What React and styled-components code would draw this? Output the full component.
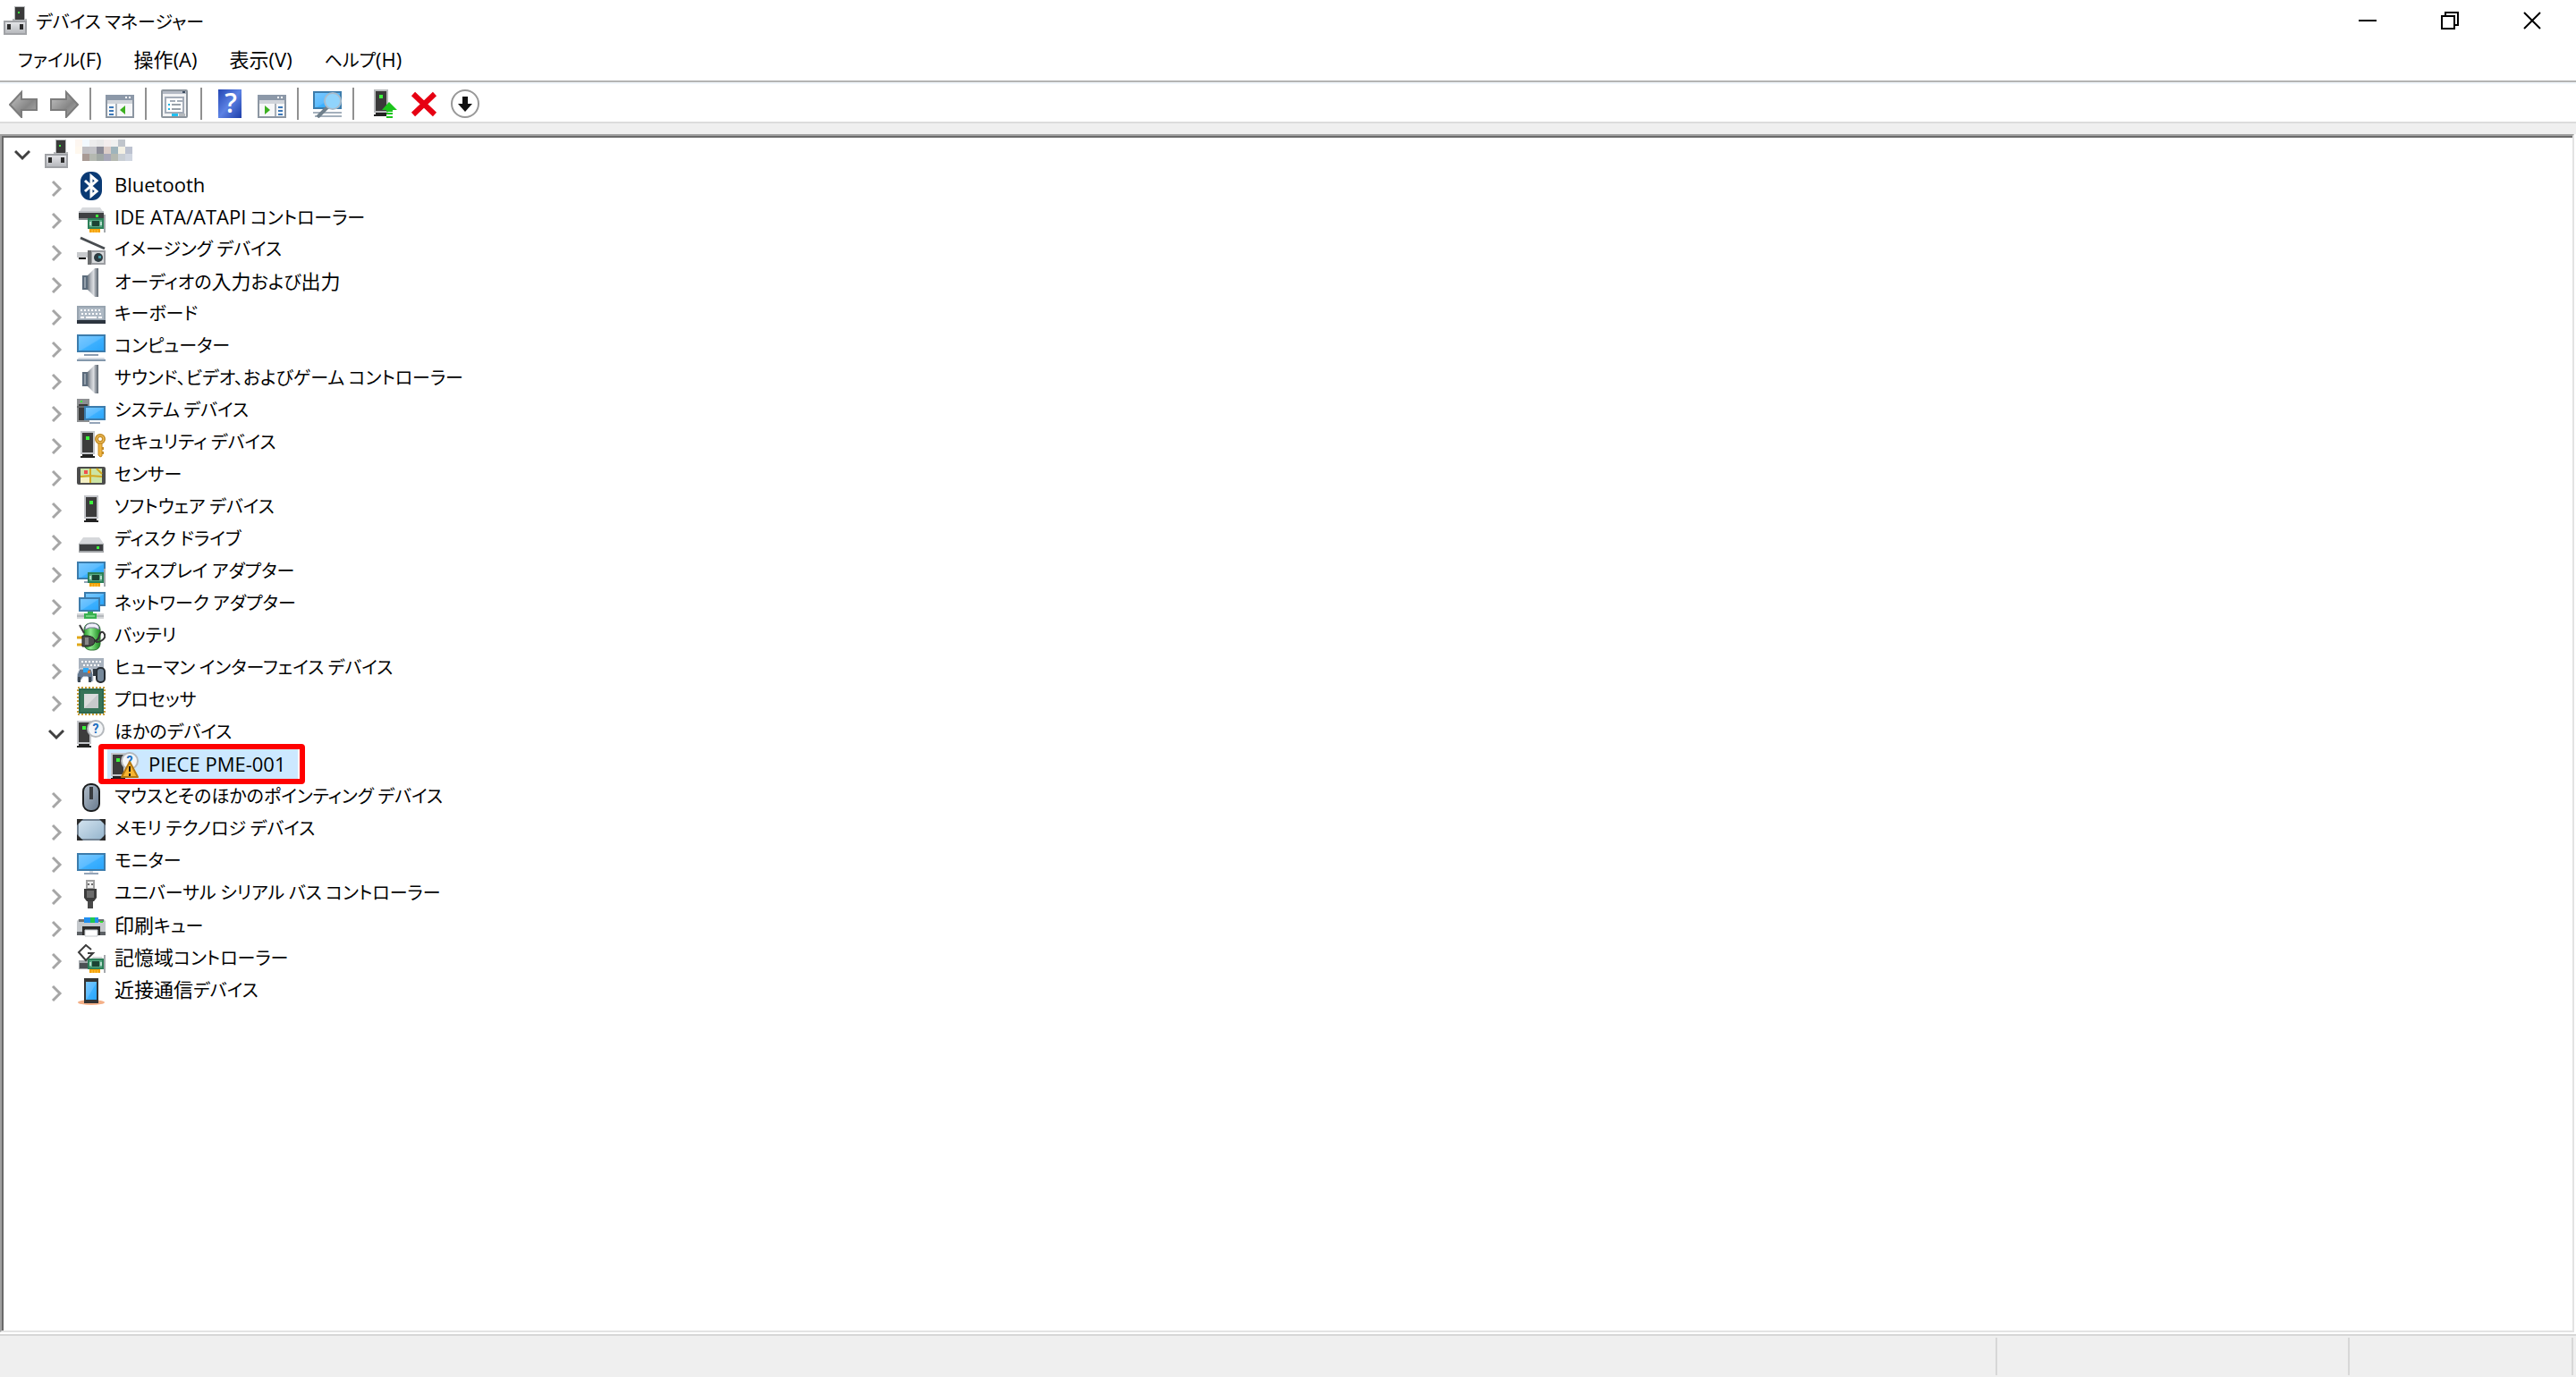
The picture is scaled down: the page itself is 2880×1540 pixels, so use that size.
import styled, { createGlobalStyle } from 'styled-components';

const GlobalStyle = createGlobalStyle`
  html, body, #root {
    height: 100%;
  }
  body {
    margin: 0;
    background: #fff;
    color: #000;
    font-family: 'Noto Sans CJK JP', sans-serif;
    font-size: 20px;
    font-feature-settings: 'palt';
  }
`;

const Window = styled.div`
  display: flex;
  flex-direction: column;
  height: 100%;
`;

const TitleBar = styled.header`
  display: flex;
  align-items: center;
  height: 46px;
  padding: 0 3px 0 2px;
`;

const Title = styled.h1`
  flex: 1;
  margin: 0 0 0 6px;
  font-size: 20px;
  font-weight: 400;
`;

const PlainButton = styled.button`
  display: flex;
  align-items: center;
  justify-content: center;
  padding: 0;
  border: 0;
  background: none;
  color: inherit;
  font: inherit;
`;

const WindowButton = styled(PlainButton)`
  width: 92px;
  height: 44px;
`;

const MenuBar = styled.nav`
  display: flex;
  height: 44px;
  padding: 0 2px;
  border-bottom: 2px solid #b4b4b4;
`;

const MenuItem = styled(PlainButton)`
  padding: 0 18px 4px;
  font-feature-settings: 'palt';
  line-height: 36px;
  white-space: nowrap;
`;

const ToolBar = styled.div`
  display: flex;
  align-items: center;
  height: 40px;
  padding: 2px 0 0 3px;
  border-top: 2px solid #f2f7fc;
  border-bottom: 2px solid #dcdcdc;
`;

const ToolButton = styled(PlainButton)`
  width: 46px;
  height: 40px;
`;

const Separator = styled.span`
  width: 2px;
  height: 36px;
  margin: 0 9px 0 5px;
  background: #909090;
`;

const Body = styled.main`
  flex: 1;
  display: flex;
  padding-top: 12px;
  background: linear-gradient(#efefef 12px, #fff 12px);
`;

const Panel = styled.div`
  flex: 1;
  display: flex;
  margin: 0 2px 2px 0;
  border: 2px solid;
  border-color: #a0a0a0 #e3e3e3 #e3e3e3 #a0a0a0;
`;

const Tree = styled.ul`
  flex: 1;
  margin: 0;
  padding: 0;
  list-style: none;
  border: solid #696969;
  border-width: 2px 0 0 2px;
`;

const Group = styled.ul`
  margin: 0;
  padding: 0 0 0 38px;
  list-style: none;
`;

const Row = styled.div`
  display: flex;
  align-items: center;
  height: 36px;
  padding-left: 12px;
`;

const Expander = styled(PlainButton)`
  width: 18px;
  height: 36px;
  margin-right: 10px;
`;

const Item = styled.div`
  position: relative;
  display: flex;
  align-items: center;
  gap: 4px;
  height: 36px;
  padding: 0 14px 0 4px;
  background: ${(p) => (p.$selected ? '#cce8ff' : 'none')};
`;

const Label = styled.span`
  padding: 0 0 4px 6px;
  line-height: 32px;
  white-space: nowrap;
`;

const Run = styled.span`
  font-family: ${(p) => (p.$latin ? "'Open Sans'" : "'Noto Sans CJK JP'")}, sans-serif;
  font-size: 22px;
  white-space: pre;
`;

const Marker = styled.span`
  position: absolute;
  inset: -6px -8px -3px -10px;
  border: 6px solid #f00;
  border-radius: 4px;
`;

const StatusBar = styled.footer`
  display: grid;
  grid-template-columns: 1fr 394px 250px;
  height: 42px;
  padding: 2px 3px 2px 0;
  border-top: 2px solid #d7d7d7;
  background: #efefef;
`;

const StatusCell = styled.div`
  border-right: 2px solid #d7d7d7;
`;

const Svg = ({ children, ...props }) => (
  <svg width='32' height='32' viewBox='0 0 32 32' fill='none' aria-hidden='true' {...props}>
    {children}
  </svg>
);

const Gradients = () => (
  <svg width='0' height='0' style={{ position: 'absolute' }} aria-hidden='true'>
    <linearGradient id='screen' x1='0' y1='0' x2='1' y2='1'>
      <stop offset='0' stopColor='#7cc9ff' />
      <stop offset='0.5' stopColor='#5cbcff' />
      <stop offset='0.55' stopColor='#3cb0ff' />
      <stop offset='1' stopColor='#28a4fb' />
    </linearGradient>
    <linearGradient id='metal' x1='0' y1='0' x2='0' y2='1'>
      <stop offset='0' stopColor='#e6e7ea' />
      <stop offset='1' stopColor='#b4b6ba' />
    </linearGradient>
    <linearGradient id='cone' x1='0' y1='0' x2='1' y2='0'>
      <stop offset='0' stopColor='#6c7680' />
      <stop offset='0.3' stopColor='#b6bac0' />
      <stop offset='0.55' stopColor='#dcdee2' />
      <stop offset='0.75' stopColor='#959ca4' />
      <stop offset='1' stopColor='#59626c' />
    </linearGradient>
    <linearGradient id='arrow' x1='0' y1='0' x2='1' y2='1'>
      <stop offset='0' stopColor='#c8c8c8' />
      <stop offset='0.6' stopColor='#868686' />
      <stop offset='1' stopColor='#b0b0b0' />
    </linearGradient>
    <linearGradient id='help' x1='0' y1='0' x2='1' y2='1'>
      <stop offset='0' stopColor='#2446b4' />
      <stop offset='0.5' stopColor='#5c82e4' />
      <stop offset='1' stopColor='#1c3ca8' />
    </linearGradient>
    <linearGradient id='mouse' x1='0' y1='0' x2='1' y2='1'>
      <stop offset='0' stopColor='#b4c0cc' />
      <stop offset='1' stopColor='#66788c' />
    </linearGradient>
    <linearGradient id='battery' x1='0' y1='0' x2='1' y2='0'>
      <stop offset='0' stopColor='#2a9a2a' />
      <stop offset='0.4' stopColor='#8ce88c' />
      <stop offset='1' stopColor='#1c8a20' />
    </linearGradient>
    <linearGradient id='memory' x1='0' y1='0' x2='1' y2='1'>
      <stop offset='0' stopColor='#d4e4f0' />
      <stop offset='1' stopColor='#94b4cc' />
    </linearGradient>
  </svg>
);

const Screen = ({ x, y, w, h }) => (
  <rect x={x + 1} y={y + 1} width={w - 2} height={h - 2} fill='url(#screen)' stroke='#3c7cac' strokeWidth='2' />
);

const Tower = ({ x, w = 16 }) => (
  <>
    <path d={`M${x} 2h${w}v26h${-w}z`} fill='#c4c6ca' />
    <path d={`M${x + 2} 4h${w - 4}v22h${4 - w}z`} fill='#3c3c3c' />
    <path d={`M${x} 30h2v-2h${w - 4}v2h2v2h${-w}z`} fill='#222' />
    <path d={`M${x + w / 2 - 2} 8h4v4h-4z`} fill='#3cf43c' />
  </>
);

const Card = () => (
  <>
    <path d='M30 12h2v20h-2z' fill='#a4a8ac' />
    <path d='M12 16h18v12H12z' fill='#2c8058' />
    <path d='M14 18h14v8H14z' fill='#58a884' />
    <path d='M17 19h8v6h-8z' fill='#1c4434' />
    <path d='M14 20h2v4h-2zM26 20h2v4h-2z' fill='#b8dccc' />
    <path d='M14 28h12v4H14z' fill='#f4a000' />
    <path d='M17 29v3M20 29v3M23 29v3' stroke='#ffc850' />
  </>
);

const Query = () => (
  <>
    <circle cx='21' cy='11' r='9' fill='#f4f6f8' stroke='#b4b8bc' strokeWidth='2' />
    <text x='21' y='16' textAnchor='middle' fontFamily='Roboto' fontWeight='700' fontSize='14' fill='#1c70c0'>
      ?
    </text>
  </>
);

const icons = {
  root: (
    <>
      <path d='M14 0h12v14h2v2H12v-2h2z' fill='#b8babc' />
      <path d='M15 1h10v14H15z' fill='#3a3a3a' />
      <path d='M18 6h2v2h-2z' fill='#3cf43c' />
      <path d='M3 17h24v14H3z' fill='url(#metal)' stroke='#a0a2a6' strokeWidth='2' />
      <path d='M6 20h4v6H6zM20 20h4v6h-4z' fill='#2c2c2c' />
    </>
  ),
  bluetooth: (
    <>
      <rect x='4' width='24' height='32' rx='11' fill='#0a3a74' />
      <path d='M9 10l13 12-6 5V5l6 5L9 22' stroke='#fff' strokeWidth='3' />
    </>
  ),
  ide: (
    <>
      <path d='M6 4h20l4 6H2z' fill='#d8dadd' />
      <path d='M2 8h28v3H2z' fill='#bcbfc4' />
      <path d='M2 10h28v8H2z' fill='#3e4042' />
      <path d='M2 16h28v2H2z' fill='#8a8d90' />
      <path d='M21 12h3v3h-3z' fill='#3cf43c' />
      <Card />
    </>
  ),
  imaging: (
    <>
      <path d='M4 2l27 12' stroke='#484c50' strokeWidth='3' />
      <path d='M0 18h12v6H0z' fill='#c8cacd' />
      <path d='M2 24h8v2H2z' fill='#141414' />
      <path d='M12 16h20v16H12z' fill='#9c9ea2' />
      <path d='M17 18h13v12H17z' fill='#d8dadc' />
      <path d='M12 16h4v16h-4z' fill='#6c6e70' />
      <circle cx='24' cy='24' r='5' fill='#2c3a40' />
      <path d='M24 22h3v3h-3z' fill='#4098a4' />
    </>
  ),
  speaker: (
    <>
      <path d='M12 8l8-8h4v32h-4l-8-8z' fill='url(#cone)' />
      <path d='M6 8h6v16H6z' fill='#5c6c7c' />
      <path d='M8 10h2v12H8z' fill='#94a0ac' />
    </>
  ),
  keyboard: (
    <>
      <path d='M0 6h32v16H0z' fill='#98a4b0' />
      <path d='M2 8h28v13H2z' fill='#aeb9c4' />
      <path d='M4 11h24M5 15h23' stroke='#fff' strokeWidth='2' strokeDasharray='2 2' />
      <path d='M4 19h4M10 19h12M24 19h4' stroke='#fff' strokeWidth='2' />
      <path d='M0 22h32v4H0z' fill='#2c343e' />
    </>
  ),
  computer: (
    <>
      <Screen x={0} y={2} w={32} h={20} />
      <path d='M8 24h16v2H8z' fill='#8c9cb0' />
      <path d='M2 28h28l2 2H0z' fill='#d4dae2' />
      <path d='M0 30h32v2H0z' fill='#8498ac' />
    </>
  ),
  system: (
    <>
      <path d='M0 2h14v26H0z' fill='#8e9092' />
      <path d='M2 8h10v18H2z' fill='#3a3a3a' />
      <path d='M0 10h14v2H0z' fill='#66686a' />
      <path d='M4 4h2v2H4z' fill='#3cf43c' />
      <Screen x={8} y={10} w={24} h={16} />
      <path d='M14 28h12v2H14z' fill='#94a4b8' />
    </>
  ),
  security: (
    <>
      <Tower x={4} />
      <circle cx='26' cy='11' r='4' stroke='#c48c24' strokeWidth='4' />
      <circle cx='26' cy='11' r='4' stroke='#f4c464' strokeWidth='1' />
      <path d='M24 16h4v14l-2 1-2-2z' fill='#f0b440' stroke='#c48c24' />
      <path d='M28 20h2v3h-2zM28 25h2v3h-2z' fill='#c48c24' />
    </>
  ),
  sensor: (
    <>
      <rect y='6' width='32' height='20' rx='2' fill='#4c4c4c' />
      <path d='M4 8h24v16H4z' fill='#cce4a4' />
      <path d='M4 18h10v6H4z' fill='#f4f0c4' />
      <path d='M15 8v16M4 17l11-1 13 1M22 8l6 6' stroke='#d4a820' strokeWidth='2' />
      <path d='M8 10h4v4H8z' fill='#f05050' />
    </>
  ),
  software: <Tower x={8} />,
  disk: (
    <>
      <path d='M7 13h18l5 7H2z' fill='#d6d8db' />
      <path d='M2 20h28v10H2z' fill='#a0a3a6' />
      <path d='M3 21h26v7H3z' fill='#3c3e40' />
      <path d='M22 23h3v3h-3z' fill='#3cf43c' />
    </>
  ),
  display: (
    <>
      <Screen x={0} y={4} w={32} h={20} />
      <path d='M8 26h4v2H8z' fill='#94a4b8' />
      <Card />
    </>
  ),
  network: (
    <>
      <Screen x={8} y={2} w={24} h={16} />
      <Screen x={2} y={8} w={24} h={16} />
      <path d='M0 26h30v6H0z' fill='#d4d6d8' />
      <path d='M0 28h30v2H0z' fill='#b4b8bc' />
      <path d='M8 26h4v-2h6v2h4v6H8z' fill='#38b050' />
      <path d='M10 28h10v2H10z' fill='#70d080' />
    </>
  ),
  battery: (
    <>
      <rect x='8' y='1' width='18' height='30' rx='7' fill='url(#battery)' stroke='#28702c' />
      <path d='M9 8q0-7 8-7t8 7l-5-2h-6z' fill='#f0f0fa' stroke='#7c7c9c' />
      <path d='M3 3l5 9' stroke='#3c3c3c' strokeWidth='2' />
      <path d='M18 21q6 0 7-6 1-5 4-4 3 2 2 6-3 5-10 5' stroke='#343434' strokeWidth='2' />
      <path d='M0 17h6M0 25h6' stroke='#e0a818' strokeWidth='3' />
      <path d='M6 15h6q8 1 8 6t-8 6H6z' fill='#4c4c4c' stroke='#202020' />
      <path d='M9 17h4v8H9z' fill='#888' />
    </>
  ),
  hid: (
    <>
      <path d='M2 4h28v16H2z' fill='#a8b2be' />
      <path d='M5 8h22M7 12h20' stroke='#fff' strokeWidth='2' strokeDasharray='2 2' />
      <path d='M3 16h13q3 6 2 14l-3 1-3-6H7l-4 6-3-1q-1-8 3-14z' fill='#647890' stroke='#e8ecf0' />
      <path d='M7 15h6v5H7z' fill='#30a8f4' />
      <path d='M12 18h3v3h-3z' fill='#f07820' />
      <path d='M1 25h3v6H1zM13 25h3v6h-3z' fill='#3c4854' />
      <rect x='22' y='15' width='9' height='16' rx='4' fill='#76889a' stroke='#242a30' strokeWidth='2' />
      <path d='M18 16h4v8h-4z' fill='#303840' />
    </>
  ),
  processor: (
    <>
      <path d='M1 1h30v30H1z' stroke='#c89c34' strokeWidth='2' strokeDasharray='2 2' />
      <path d='M2 2h28v28H2z' fill='#2c6850' />
      <path d='M4 4h24v24H4z' fill='#387458' />
      <path d='M8 8h16v16H8z' fill='#dcdcdc' />
      <path d='M8 24L24 8v16z' fill='#c8cacc' />
    </>
  ),
  other: (
    <>
      <Tower x={0} />
      <Query />
    </>
  ),
  warning: (
    <>
      <Tower x={0} />
      <Query />
      <path d='M21 12l9 17H12z' fill='#f8b430' stroke='#b47810' strokeWidth='2' strokeLinejoin='round' />
      <path d='M21 17v6M21 25v3' stroke='#141414' strokeWidth='2' />
    </>
  ),
  mouse: (
    <>
      <rect x='7' y='1' width='18' height='30' rx='8' fill='url(#mouse)' stroke='#1c1e20' strokeWidth='2' />
      <path d='M14 4h4v14h-4z' fill='#383c40' />
    </>
  ),
  memory: (
    <>
      <rect x='1' y='5' width='30' height='22' rx='2' fill='url(#memory)' stroke='#748494' strokeWidth='2' />
      <path d='M0 4h7L0 11zM32 4h-7l7 7zM0 28h7l-7-7zM32 28h-7l7-7z' fill='#2c2c2c' />
    </>
  ),
  monitor: (
    <>
      <Screen x={0} y={6} w={32} h={20} />
      <path d='M8 28h16v2H8z' fill='#94a4b8' />
      <path d='M14 26h4v2h-4z' fill='#d0d8e0' />
    </>
  ),
  usb: (
    <>
      <path d='M11 1h8v9h-8z' fill='#ececec' stroke='#a0a0a0' strokeWidth='2' />
      <path d='M12 4h2v2h-2zM16 4h2v2h-2z' fill='#6c6c6c' />
      <path d='M8 10h14v10l-3 4h-8l-3-4z' fill='#3c3c3c' />
      <path d='M11 12h8v8h-8z' fill='#6c6c6c' />
      <path d='M12 24h6v8h-6z' fill='#484848' />
    </>
  ),
  printer: (
    <>
      <path d='M8 6h16v6H8z' fill='#2090f0' />
      <path d='M15 6h5v6h-5z' fill='#20c850' />
      <path d='M2 8h6v4h16V8h6l2 2v14H0V10z' fill='#c4c8cc' />
      <path d='M2 8h6v3H2zM24 8h6v3h-6z' fill='#6c7074' />
      <path d='M26 10h3v2h-3z' fill='#30e030' />
      <path d='M6 16h20v10H6z' fill='#2c2c2c' />
      <path d='M0 22h6v4H0zM26 22h6v4h-6z' fill='#5c6064' />
      <path d='M9 20h14v7H9z' fill='#fff' stroke='#c4c8cc' />
    </>
  ),
  storage: (
    <>
      <path d='M2 18h28v10H2z' fill='#a4a8ac' />
      <path d='M3 21h10v6H3z' fill='#4c5054' />
      <path d='M18 14h10l2 4H14z' fill='#d4d6d8' />
      <path d='M16 6l-6-5-8 8 8 9 8-8h-6' stroke='#3c3c3c' strokeWidth='2' />
      <Card />
    </>
  ),
  phone: (
    <>
      <ellipse cx='16' cy='29' rx='15' ry='3' fill='#f4b088' />
      <path d='M8 2h16v28H8z' fill='#343434' />
      <path d='M10 6h12v20H10z' fill='url(#screen)' />
    </>
  ),
};

const PaneFrame = () => (
  <>
    <path d='M1 7h30v24H1z' fill='#f6f7f8' stroke='#8c96a2' strokeWidth='2' />
    <path d='M0 6h32v6H0z' fill='#8c98a8' />
    <path d='M22 8h2v2h-2zM26 8h2v2h-2z' fill='#fff' />
    <path d='M2 12h28v4H2z' fill='#d0d4da' />
  </>
);

const tools = [
  {
    label: '戻る',
    icon: <path d='M1 17L14 3v8h17v12H14v8z' fill='url(#arrow)' stroke='#7c7c7c' strokeWidth='2' />,
  },
  {
    label: '進む',
    icon: <path d='M31 17L18 3v8H1v12h17v8z' fill='url(#arrow)' stroke='#7c7c7c' strokeWidth='2' />,
  },
  null,
  {
    label: 'コンソール ツリーの表示/非表示',
    icon: (
      <>
        <PaneFrame />
        <path d='M4 20h5M4 24h5M4 28h5' stroke='#3c78b8' strokeWidth='2' />
        <path d='M11 16h2v14h-2z' fill='#a8b0b8' />
        <path d='M22 18v10l-6-5z' fill='#3cb020' />
      </>
    ),
  },
  null,
  {
    label: 'プロパティ',
    icon: (
      <>
        <rect x='1' y='1' width='28' height='30' rx='1' fill='#f2f3f4' stroke='#8c949c' strokeWidth='2' />
        <path d='M2 2h26v3H2z' fill='#b4bac4' />
        <path d='M24 2h3v2h-3z' fill='#3c4c60' />
        <path d='M5 9h20v17H5z' fill='#fff' stroke='#a4acb8' strokeWidth='2' />
        <path d='M10 12h6v2h-6zM18 12h6v2h-6z' fill='#a4acb8' />
        <path d='M8 16h2v2H8zM8 21h2v2H8z' fill='#20b8e8' />
        <path d='M12 17h10M12 22h10' stroke='#98a0a8' strokeWidth='2' />
        <path d='M12 27h7v3h-7z' fill='#20c0f0' />
        <path d='M20 27h7v3h-7z' fill='#b4b8bc' />
      </>
    ),
  },
  null,
  {
    label: 'ヘルプ',
    icon: (
      <>
        <path d='M2 0h26v32H2z' fill='url(#help)' />
        <text x='16' y='26' textAnchor='middle' fontFamily='Open Sans' fontWeight='600' fontSize='30' fill='#fff'>
          ?
        </text>
      </>
    ),
  },
  {
    label: '操作ウィンドウの表示/非表示',
    icon: (
      <>
        <PaneFrame />
        <path d='M23 20h5M23 24h5M23 28h5' stroke='#3c78b8' strokeWidth='2' />
        <path d='M19 16h2v14h-2z' fill='#a8b0b8' />
        <path d='M8 18v10l6-5z' fill='#3cb020' />
      </>
    ),
  },
  null,
  {
    label: 'ハードウェア変更のスキャン',
    icon: (
      <>
        <Screen x={0} y={2} w={32} h={20} />
        <path d='M0 26h32M2 30h30' stroke='#a4b0bc' strokeWidth='2' />
        <path d='M16 20L5 31' stroke='#70808c' strokeWidth='4' />
        <circle cx='22' cy='13' r='9' fill='#90d4fc' stroke='#a8bccc' strokeWidth='2' />
      </>
    ),
  },
  null,
  {
    label: 'ドライバーの更新',
    icon: (
      <>
        <path d='M6 0h16v26H6z' fill='#b8babc' />
        <path d='M8 2h12v22H8z' fill='#3a3a3a' />
        <path d='M6 28h2v-2h12v4H6z' fill='#222' />
        <path d='M12 6h4v4h-4z' fill='#3cf43c' />
        <path d='M23 14l9 9h-5v2h-7v-2h-5zM20 26h7v2h-7zM20 30h7v2h-7z' fill='#1cc41c' />
      </>
    ),
  },
  {
    label: 'デバイスのアンインストール',
    icon: <path d='M4 5l24 23M28 5L4 28' stroke='#e60012' strokeWidth='6' />,
  },
  {
    label: 'デバイスを無効にする',
    icon: (
      <>
        <circle cx='16' cy='16' r='15' fill='#fff' stroke='#989898' strokeWidth='2' />
        <path d='M13 8h6v8h5l-8 9-8-9h5z' fill='#101010' />
      </>
    ),
  },
];

const menus = ['ファイル(F)', '操作(A)', '表示(V)', 'ヘルプ(H)'];

const devices = [
  { name: 'Bluetooth', icon: 'bluetooth' },
  { name: 'IDE ATA/ATAPI コントローラー', icon: 'ide' },
  { name: 'イメージング デバイス', icon: 'imaging' },
  { name: 'オーディオの入力および出力', icon: 'speaker' },
  { name: 'キーボード', icon: 'keyboard' },
  { name: 'コンピューター', icon: 'computer' },
  { name: 'サウンド、ビデオ、およびゲーム コントローラー', icon: 'speaker' },
  { name: 'システム デバイス', icon: 'system' },
  { name: 'セキュリティ デバイス', icon: 'security' },
  { name: 'センサー', icon: 'sensor' },
  { name: 'ソフトウェア デバイス', icon: 'software' },
  { name: 'ディスク ドライブ', icon: 'disk' },
  { name: 'ディスプレイ アダプター', icon: 'display' },
  { name: 'ネットワーク アダプター', icon: 'network' },
  { name: 'バッテリ', icon: 'battery' },
  { name: 'ヒューマン インターフェイス デバイス', icon: 'hid' },
  { name: 'プロセッサ', icon: 'processor' },
  {
    name: 'ほかのデバイス',
    icon: 'other',
    children: [{ name: 'PIECE PME-001', icon: 'warning', selected: true }],
  },
  { name: 'マウスとそのほかのポインティング デバイス', icon: 'mouse' },
  { name: 'メモリ テクノロジ デバイス', icon: 'memory' },
  { name: 'モニター', icon: 'monitor' },
  { name: 'ユニバーサル シリアル バス コントローラー', icon: 'usb' },
  { name: '印刷キュー', icon: 'printer' },
  { name: '記憶域コントローラー', icon: 'storage' },
  { name: '近接通信デバイス', icon: 'phone' },
];

// Kana is set one step smaller than kanji and Latin
const Caption = ({ text }) => (
  <span>
    {text.split(/([!-~]+(?: [!-~]+)*|[一-龠]+)/).map((part, i) =>
      i % 2 ? (
        <Run key={i} $latin={/[!-~]/.test(part)}>
          {part}
        </Run>
      ) : (
        part
      )
    )}
  </span>
);

// Colour blocks hiding the computer name
const mosaic = [
  ['#fdf6f0', '#f2f9fe', '#ededed', '#e8e8e8', '#f3eded', '#f0f0f0', '#c0c5cc', '#fff'],
  ['#fff8ee', '#c0c0c4', '#c3c3c7', '#8c8c98', '#dccdc8', '#9fb4bc', '#f3f0e4', '#bcc2d0'],
  ['#fff', '#a89a94', '#b4b8b0', '#a0a8a4', '#a8a8b8', '#b4b8b0', '#c8ced4', '#d0d6e0'],
];

const Mosaic = () => (
  <svg width='64' height='32' viewBox='0 0 64 32' aria-hidden='true'>
    {mosaic.map((line, y) =>
      line.map((fill, x) => <rect key={`${x}-${y}`} x={x * 8} y={y * 8} width='8' height='8' fill={fill} />)
    )}
  </svg>
);

const Chevron = ({ open }) => (
  <svg width='18' height='24' viewBox='0 0 18 24' fill='none' aria-hidden='true'>
    {open ? (
      <path d='M1 9l8 8 8-8' stroke='#404040' strokeWidth='3' />
    ) : (
      <path d='M5 7l8 8-8 8' stroke='#a6a6a6' strokeWidth='3' />
    )}
  </svg>
);

function Node({ name, icon, selected, children, leaf }) {
  return (
    <li role='treeitem' aria-selected={Boolean(selected)}>
      <Row>
        {leaf ? (
          <Expander as='span' />
        ) : (
          <Expander type='button' aria-label={name} aria-expanded={Boolean(children)}>
            <Chevron open={Boolean(children)} />
          </Expander>
        )}
        <Item $selected={selected}>
          <Svg>{icons[icon]}</Svg>
          <Label>
            <Caption text={name} />
          </Label>
          {selected && <Marker />}
        </Item>
      </Row>
      {children && (
        <Group role='group'>
          {children.map((child) => (
            <Node key={child.name} {...child} leaf />
          ))}
        </Group>
      )}
    </li>
  );
}

export default function App() {
  return (
    <Window>
      <GlobalStyle />
      <Gradients />
      <TitleBar>
        <Svg>{icons.root}</Svg>
        <Title>デバイス マネージャー</Title>
        <WindowButton type='button' aria-label='最小化'>
          <svg width='20' height='20' viewBox='0 0 20 20'>
            <path d='M0 9h20v2H0z' />
          </svg>
        </WindowButton>
        <WindowButton type='button' aria-label='元に戻す'>
          <svg width='20' height='20' viewBox='0 0 20 20' fill='none' stroke='#000' strokeWidth='2'>
            <path d='M1 5h14v14H1zM5 5V1h14v14h-4' />
          </svg>
        </WindowButton>
        <WindowButton type='button' aria-label='閉じる'>
          <svg width='20' height='20' viewBox='0 0 20 20' fill='none' stroke='#000' strokeWidth='2'>
            <path d='M1 1l18 18M19 1L1 19' />
          </svg>
        </WindowButton>
      </TitleBar>
      <MenuBar>
        {menus.map((menu) => (
          <MenuItem key={menu} type='button'>
            <Caption text={menu} />
          </MenuItem>
        ))}
      </MenuBar>
      <ToolBar role='toolbar'>
        {tools.map((tool, i) =>
          tool ? (
            <ToolButton key={tool.label} type='button' aria-label={tool.label}>
              <Svg>{tool.icon}</Svg>
            </ToolButton>
          ) : (
            <Separator key={i} />
          )
        )}
      </ToolBar>
      <Body>
        <Panel>
          <Tree role='tree'>
            <li role='treeitem' aria-expanded='true'>
              <Row>
                <Expander type='button' aria-label='コンピューター'>
                  <Chevron open />
                </Expander>
                <Item>
                  <Svg>{icons.root}</Svg>
                  <Mosaic />
                </Item>
              </Row>
              <Group role='group'>
                {devices.map((device) => (
                  <Node key={device.name} {...device} />
                ))}
              </Group>
            </li>
          </Tree>
        </Panel>
      </Body>
      <StatusBar>
        <StatusCell />
        <StatusCell />
        <StatusCell />
      </StatusBar>
    </Window>
  );
}
